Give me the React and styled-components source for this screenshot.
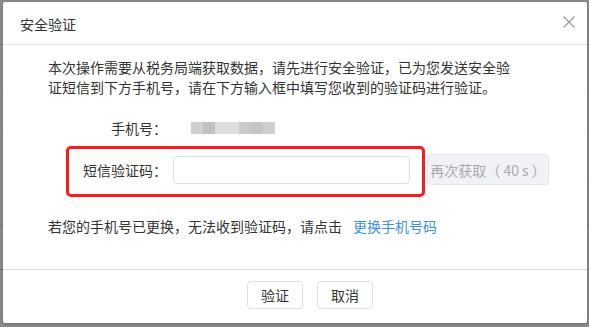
import React from "react";
import styled, { createGlobalStyle } from "styled-components";

const Global = createGlobalStyle`
  html, body { margin: 0; padding: 0; }
  body {
    background: #8a8a8a;
    font-family: "Noto Sans CJK SC", "Noto Sans", sans-serif;
    color: #333;
  }
  * { box-sizing: border-box; }
`;

const Backdrop = styled.div`
  width: 589px;
  height: 327px;
  padding: 2px 2px 4px 3px;
  background:
    repeating-linear-gradient(180deg, transparent 0 44px, #7c7c7c 44px 45px),
    #8e8e8e;
  overflow: hidden;
`;

const Dialog = styled.div`
  width: 584px;
  height: 321px;
  background: #fff;
  border-radius: 2px;
  box-shadow: 0 1px 4px rgba(0, 0, 0, 0.25);
  display: flex;
  flex-direction: column;
`;

const Header = styled.div`
  height: 43px;
  flex: none;
  display: flex;
  align-items: center;
  justify-content: space-between;
  padding: 2px 12px 0 17px;
  border-bottom: 1px solid #e3e3e3;
`;

const Title = styled.div`
  font-size: 14px;
  color: #333;
`;

const Close = styled.button`
  border: none;
  background: none;
  padding: 0;
  width: 12px;
  height: 12px;
  margin-top: -5px;
  display: flex;
  cursor: pointer;
`;

const Body = styled.div`
  flex: 1;
  padding: 12px 0 0 45px;
`;

const Intro = styled.p`
  margin: 0;
  width: 468px;
  font-size: 14px;
  line-height: 20px;
  color: #333;
`;

const Row = styled.div`
  display: flex;
  align-items: center;
  margin-top: ${(p) => p.$top}px;
  margin-left: ${(p) => p.$left}px;
`;

const Label = styled.div`
  width: 98px;
  text-align: right;
  font-size: 14px;
  line-height: 20px;
  color: #333;
  flex: none;
`;

const Mask = styled.div`
  display: flex;
  margin-left: 24px;
`;

const MaskBlock = styled.span`
  width: 12px;
  height: 12px;
  background: ${(p) => p.$c};
`;

const Highlight = styled.div`
  display: flex;
  align-items: center;
  gap: 6px;
  border: 3px solid #ff1a1a;
  border-radius: 5px;
  padding: 7px 12px 10px 0;
`;

const Input = styled.input`
  width: 237px;
  height: 28px;
  border: 1px solid #dcdfe6;
  border-radius: 4px;
  padding: 0 8px;
  font-size: 14px;
  outline: none;
`;

const Resend = styled.button`
  align-self: flex-start;
  margin: 8px 0 0 2px;
  width: 122px;
  height: 31px;
  border: 1px solid #e4e7ed;
  border-radius: 3px;
  background: #f0f2f5;
  color: #a7abb1;
  font-family: inherit;
  font-size: 14px;
  padding: 0;
  white-space: nowrap;
  cursor: not-allowed;
`;

const Hint = styled.div`
  margin-top: 19px;
  font-size: 14px;
  line-height: 20px;
  color: #333;
`;

const Link = styled.a`
  color: #3d8fe8;
  margin-left: 11px;
  text-decoration: none;
  cursor: pointer;
`;

const Footer = styled.div`
  height: 54px;
  flex: none;
  border-top: 1px solid #dadada;
  display: flex;
  align-items: center;
  justify-content: center;
  gap: 14px;
  padding: 0 0 3px 30px;
`;

const Button = styled.button`
  height: 28px;
  padding: 0 13px;
  border: 1px solid #dcdfe6;
  border-radius: 4px;
  background: #fff;
  color: #333;
  font-family: inherit;
  font-size: 14px;
  cursor: pointer;
`;

const maskColors = ["#cfcfcf", "#c1c1c1", "#dcdedd", "#dedfde", "#cccbcb", "#c4c4c6", "#cfcfcf"];

export default function App() {
  return (
    <>
      <Global />
      <Backdrop>
        <Dialog>
          <Header>
            <Title>安全验证</Title>
            <Close aria-label="关闭">
              <svg width="12" height="12" viewBox="0 0 12 12">
                <path d="M0.5 0.5 L11.5 11.5 M11.5 0.5 L0.5 11.5" stroke="#9a9a9a" strokeWidth="1.1" fill="none" />
              </svg>
            </Close>
          </Header>
          <Body>
            <Intro>
              本次操作需要从税务局端获取数据，请先进行安全验证，已为您发送安全验证短信到下方手机号，请在下方输入框中填写您收到的验证码进行验证。
            </Intro>
            <Row $top={21} $left={21}>
              <Label>手机号：</Label>
              <Mask>
                {maskColors.map((c, i) => (
                  <MaskBlock key={i} $c={c} />
                ))}
              </Mask>
            </Row>
            <Row $top={8} $left={18}>
              <Highlight>
                <Label>短信验证码：</Label>
                <Input type="text" />
              </Highlight>
              <Resend disabled>再次获取（ 40 s ）</Resend>
            </Row>
            <Hint>
              若您的手机号已更换，无法收到验证码，请点击<Link>更换手机号码</Link>
            </Hint>
          </Body>
          <Footer>
            <Button>验证</Button>
            <Button>取消</Button>
          </Footer>
        </Dialog>
      </Backdrop>
    </>
  );
}
